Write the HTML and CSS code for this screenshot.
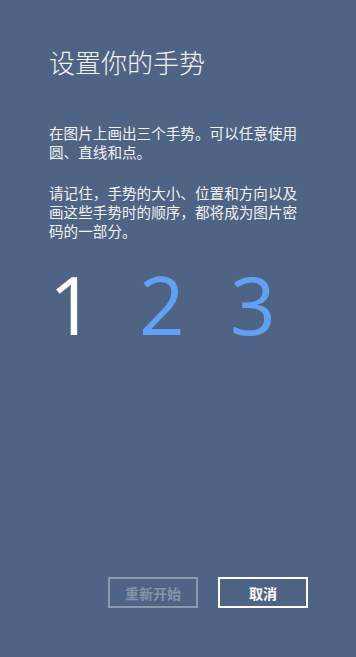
FILE: index.html
```html
<!DOCTYPE html>
<html lang="zh-CN">
  <head>
    <meta charset="UTF-8" />
    <title>设置你的手势</title>
    <link rel="stylesheet" href="styles.css">
  </head>
  <body>
    <div class="page">
      <h1 class="title">设置你的手势</h1>
      <p class="desc">在图片上画出三个手势。可以任意使用圆、直线和点。</p>
      <p class="desc">请记住，手势的大小、位置和方向以及画这些手势时的顺序，都将成为图片密码的一部分。</p>

      <div class="steps">
        <span class="step current">1</span>
        <span class="step">2</span>
        <span class="step">3</span>
      </div>

      <div class="buttons">
        <button class="btn" disabled>重新开始</button>
        <button class="btn">取消</button>
      </div>
    </div>
  </body>
</html>
```

FILE: styles.css
```css
body {
  margin: 0;
  padding: 0;
  background-color: #4f6484;
  color: #f2f2f2;
  font-family: "Noto Sans CJK SC", "Noto Sans", sans-serif;
}
.page {
  height: 657px;
  box-sizing: border-box;
  padding: 44px 48px 49px 49px;
  display: flex;
  flex-direction: column;
}
.title {
  margin: 0 0 43px;
  font-size: 26px;
  font-weight: 300;
  line-height: 36px;
}
.desc {
  margin: 0 0 22px;
  font-size: 14.6px;
  line-height: 19px;
  width: 252px;
}
.steps {
  display: flex;
  margin-top: -3px;
}
.step {
  flex: none;
  width: 91px;
  font-family: "Open Sans", "Noto Sans", sans-serif;
  font-size: 80px;
  line-height: 90px;
  color: #62a0f6;
}
.step.current {
  width: 90px;
  color: #ffffff;
}
.step:last-child {
  width: auto;
}
.buttons {
  margin-top: auto;
  display: flex;
  justify-content: flex-end;
  gap: 20px;
}
.btn {
  width: 90px;
  height: 31px;
  padding: 0;
  border: 2px solid #ffffff;
  background: transparent;
  color: #ffffff;
  font-family: "Noto Sans CJK SC", sans-serif;
  font-size: 14px;
  font-weight: bold;
}
.btn:disabled {
  border-color: #8b99af;
  color: #8593a9;
}
```
